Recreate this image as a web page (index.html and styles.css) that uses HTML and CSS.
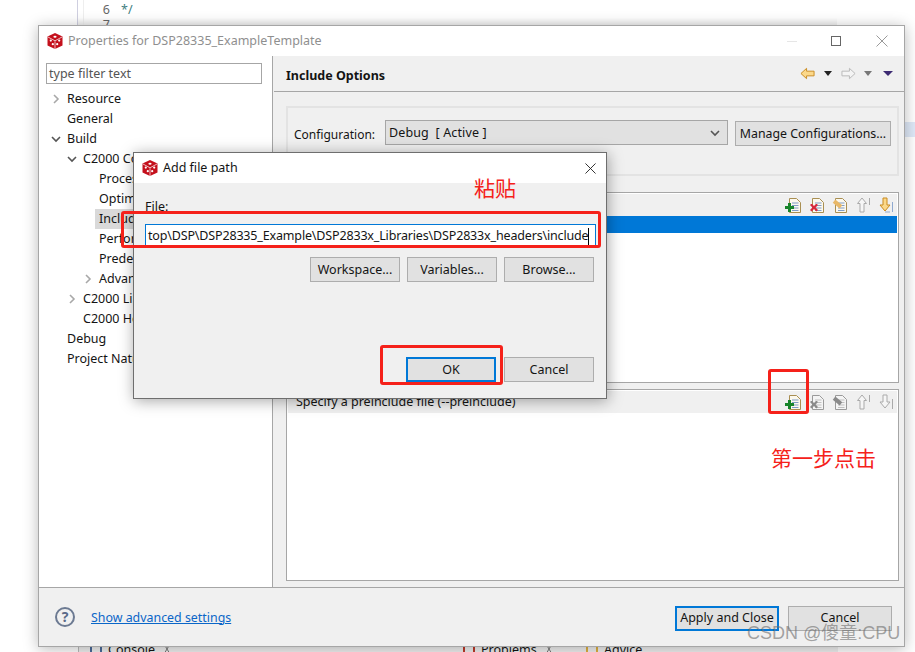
FILE: index.html
```html
<!DOCTYPE html>
<html lang="en">
<head>
<meta charset="utf-8">
<title>Properties for DSP28335_ExampleTemplate</title>
<link rel="stylesheet" href="styles.css">
</head>
<body>
<svg class="defs" width="0" height="0" aria-hidden="true">
  <symbol id="cube" viewBox="0 0 16 16">
    <path d="M8 0 15.5 3.4v9L8 16 .5 12.4v-9z" fill="#c4101c"/>
    <path d="M8 8.2V16M1 4l7 3.8L15 4" fill="none" stroke="#fff" stroke-width=".7"/>
    <ellipse cx="8" cy="3.7" rx="1.6" ry="1" fill="#fff"/>
    <circle cx="3.8" cy="7.6" r="1.1" fill="#fff"/><circle cx="5.8" cy="11.2" r="1.1" fill="#fff"/>
    <circle cx="12.2" cy="7.6" r="1.1" fill="#fff"/><circle cx="10.2" cy="11.2" r="1.1" fill="#fff"/>
  </symbol>
  <symbol id="doc" viewBox="0 0 14 15">
    <path d="M2.5 .5h7l4 4v10h-11z" fill="#fbf8ee" stroke="#a98f52"/>
    <path d="M5 5h6.5M5 7.5h6.5M5 10h6.5M5 12.5h6.5" stroke="#7f9cc6"/>
  </symbol>
  <symbol id="docg" viewBox="0 0 14 15">
    <path d="M2.5 .5h7l4 4v10h-11z" fill="#f4f4f4" stroke="#9a9a9a"/>
    <path d="M5 5h6.5M5 7.5h6.5M5 10h6.5M5 12.5h6.5" stroke="#c0c0c0"/>
  </symbol>
  <symbol id="pin" viewBox="0 0 12 12"><path d="M2 1h8M3 1l3 5 3-5M6 6l-3 5h6z" fill="none" stroke="#777"/></symbol>
  <symbol id="chev-r" viewBox="0 0 10 10"><path d="M3 1l4 4-4 4" fill="none" stroke="#a8a8a8" stroke-width="1.6"/></symbol>
  <symbol id="chev-d" viewBox="0 0 10 10"><path d="M1 3l4 4 4-4" fill="none" stroke="#555" stroke-width="1.6"/></symbol>
</svg>

<div class="editor">
  <div class="gutter"><span>6</span><span>7</span></div>
  <div class="code">*/</div>
</div>
<div class="sel-row"></div>
<div class="bottom-tabs">
  <span class="btab btab-console"><i class="tab-ico"></i>Console <svg class="tab-pin"><use href="#pin"/></svg></span>
  <span class="btab btab-problems"><i class="tab-ico tab-ico-red"></i>Problems <svg class="tab-pin"><use href="#pin"/></svg></span>
  <span class="btab btab-advice"><i class="tab-ico tab-ico-yellow"></i>Advice</span>
</div>

<div class="window">
  <header class="titlebar">
    <svg class="logo"><use href="#cube"/></svg>
    <span class="title-text">Properties for DSP28335_ExampleTemplate</span>
    <span class="win-ctrls">
      <i class="min"></i><i class="max"></i>
      <svg class="close" viewBox="0 0 12 12"><path d="M.5.5l11 11M11.5.5l-11 11" stroke="#9a9a9a" fill="none"/></svg>
    </span>
  </header>

  <div class="main">
    <aside class="side">
      <div class="filter">type filter text</div>
      <ul class="tree">
        <li class="l0"><svg class="tw"><use href="#chev-r"/></svg>Resource</li>
        <li class="l0">General</li>
        <li class="l0"><svg class="tw"><use href="#chev-d"/></svg>Build</li>
        <li class="l1"><svg class="tw"><use href="#chev-d"/></svg>C2000 Compiler</li>
        <li class="l2">Processor Options</li>
        <li class="l2">Optimization</li>
        <li class="l2 selected">Include Options</li>
        <li class="l2">Performance</li>
        <li class="l2">Predefined Symbols</li>
        <li class="l2"><svg class="tw"><use href="#chev-r"/></svg>Advanced Options</li>
        <li class="l1"><svg class="tw"><use href="#chev-r"/></svg>C2000 Linker</li>
        <li class="l1">C2000 Hex Utility</li>
        <li class="l0">Debug</li>
        <li class="l0">Project Natures</li>
      </ul>
    </aside>

    <section class="content">
      <div class="content-head">
        <h1>Include Options</h1>
        <div class="nav">
          <svg class="nav-arrow" viewBox="0 0 16 13"><path d="M7 1 1 6.5 7 12V9h8V4H7z" fill="#fbd88a" stroke="#c98a1e"/></svg>
          <i class="tri"></i>
          <svg class="nav-arrow nav-fwd" viewBox="0 0 16 13"><path d="M9 1l6 5.5L9 12V9H1V4h8z" fill="#f4f4f4" stroke="#b8b8b8"/></svg>
          <i class="tri tri-gray"></i>
          <i class="tri tri-purple"></i>
        </div>
      </div>
      <div class="content-body">
        <div class="config">
          <label>Configuration:</label>
          <div class="combo"><span class="combo-text">Debug&nbsp;&nbsp;[ Active ]</span><svg class="combo-chev"><use href="#chev-d"/></svg></div>
          <button class="btn btn-manage">Manage Configurations...</button>
        </div>

        <div class="listbox listbox-top">
          <div class="list-bar">
            <span class="bar-label">Add dir to #include search path</span>
            <span class="tools">
              <span class="tool"><svg><use href="#doc"/></svg><i class="badge badge-add"></i></span>
              <span class="tool"><svg><use href="#doc"/></svg><i class="badge badge-del"></i></span>
              <span class="tool"><svg><use href="#doc"/></svg><i class="badge badge-edit"></i></span>
              <svg class="tool-arrow" viewBox="0 0 14 16"><path d="M6 1 1.5 6.5H4V15h4V6.500h2.500z" fill="#f6f6f6" stroke="#aaa"/><path d="M13.500 1v7" stroke="#aaa"/></svg>
              <svg class="tool-arrow" viewBox="0 0 14 16"><path d="M4 1h4v7h3l-5 6-5-6h3z" fill="#fbd88a" stroke="#c98a1e"/><path d="M13.500 5v10M6 15h5" stroke="#8fa9cf"/></svg>
            </span>
          </div>
          <div class="list-row-sel"></div>
        </div>

        <div class="listbox listbox-bottom">
          <div class="list-bar">
            <span class="bar-label">Specify a preinclude file (--preinclude)</span>
            <span class="tools">
              <span class="tool"><svg><use href="#doc"/></svg><i class="badge badge-add"></i></span>
              <span class="tool"><svg><use href="#docg"/></svg><i class="badge badge-del badge-gray"></i></span>
              <span class="tool"><svg><use href="#docg"/></svg><i class="badge badge-edit badge-gray"></i></span>
              <svg class="tool-arrow" viewBox="0 0 14 16"><path d="M6 1 1.500 6.500H4V15h4V6.500h2.500z" fill="#f6f6f6" stroke="#aaa"/><path d="M13.500 1v7" stroke="#aaa"/></svg>
              <svg class="tool-arrow" viewBox="0 0 14 16"><path d="M4 1h4v7h3l-5 6-5-6h3z" fill="#f6f6f6" stroke="#aaa"/><path d="M13.500 5v10" stroke="#aaa"/></svg>
            </span>
          </div>
        </div>
      </div>
    </section>
  </div>

  <footer class="footer">
    <span class="help">?</span>
    <a class="adv">Show advanced settings</a>
    <span class="foot-btns">
      <button class="btn btn-foot btn-default">Apply and Close</button>
      <button class="btn btn-foot">Cancel</button>
    </span>
  </footer>
</div>

<div class="dialog">
  <header class="dlg-title">
    <svg class="logo"><use href="#cube"/></svg>
    <span>Add file path</span>
    <svg class="dlg-close" viewBox="0 0 12 12"><path d="M.5.5l11 11M11.5.5l-11 11" stroke="#222" fill="none"/></svg>
  </header>
  <div class="dlg-body">
    <div class="file-label">File:</div>
    <div class="file-input"><span class="file-text">top\DSP\DSP28335_Example\DSP2833x_Libraries\DSP2833x_headers\include</span><i class="caret"></i></div>
    <div class="dlg-row">
      <button class="btn btn-dlg">Workspace...</button>
      <button class="btn btn-dlg">Variables...</button>
      <button class="btn btn-dlg">Browse...</button>
    </div>
    <div class="dlg-actions">
      <button class="btn btn-dlg btn-default">OK</button>
      <button class="btn btn-dlg">Cancel</button>
    </div>
  </div>
</div>

<div class="mark mark-input"></div>
<div class="mark mark-ok"></div>
<div class="mark mark-add"></div>
<div class="note note-paste">粘贴</div>
<div class="note note-step">第一步点击</div>
<div class="watermark">CSDN @傻童:CPU</div>
</body>
</html>
```

FILE: styles.css
```css
* { box-sizing: border-box; }
html, body { margin: 0; height: 100%; }
body {
  position: relative;
  width: 915px;
  height: 652px;
  overflow: hidden;
  background: #fff;
  font: 12.5px/20px "Noto Sans", "Noto Sans CJK SC", sans-serif;
  color: #141414;
}
.defs { position: absolute; }
ul { list-style: none; margin: 0; padding: 0; }
h1 { margin: 0; padding-top: 6px; font-size: 12.5px; font-weight: 700; }

/* background IDE */
.editor {
  position: absolute; left: 77px; top: 0; width: 760px; height: 25px;
  display: flex; border-left: 1px solid #cfcfe0;
  background: linear-gradient(#fff 70%, #f0f0f0);
}
.gutter {
  width: 32px; padding-right: 5px; text-align: right; color: #666; line-height: 15px;
  padding-top: 2px; display: flex; flex-direction: column; border-left: 1px solid #eee; margin-left: 5px;
}
.code { color: #3f7f7f; padding: 2px 0 0 6px; line-height: 15px; }
.sel-row { position: absolute; left: 905px; top: 122px; width: 10px; height: 15px; background: #dfe9f8; }
.bottom-tabs {
  position: absolute; left: 78px; top: 647px; width: 760px; height: 5px;
  background: #f0f0f0; border-left: 1px solid #bbb;
}
.btab { position: absolute; top: -6px; line-height: 17px; font-size: 12.5px; white-space: nowrap; }
.tab-pin { width: 12px; height: 12px; vertical-align: -1px; margin-left: 3px; }
.btab-console { left: 11px; }
.btab-problems { left: 384px; }
.btab-advice { left: 507px; }
.tab-ico { display: inline-block; width: 12px; height: 12px; margin-right: 6px; border: 2px solid #4a6a9a; vertical-align: -1px; }
.tab-ico-red { border-color: #c0392b; }
.tab-ico-yellow { border-color: #e0b040; }

/* main window */
.window {
  position: absolute; left: 38px; top: 25px; width: 867px; height: 622px;
  display: flex; flex-direction: column;
  background: #f0f0f0; border: 1px solid #a6a6a6;
  box-shadow: 0 2px 14px rgba(0,0,0,.28);
}
.titlebar {
  height: 30px; flex: none; background: #fff;
  display: flex; align-items: center; padding-left: 8px; color: #9a9a9a;
}
.logo { width: 16px; height: 16px; flex: none; margin-right: 5px; }
.title-text { color: #8f8f8f; }
.win-ctrls { margin-left: auto; display: flex; align-items: center; }
.min { width: 10px; height: 1px; background: #e6e6e6; margin-right: 34px; }
.max { width: 10px; height: 10px; border: 1px solid #666; margin-right: 35px; }
.close { width: 12px; height: 12px; margin-right: 16px; }

.main { flex: 1; display: flex; min-height: 0; }
.side { width: 234px; flex: none; background: #fff; border-right: 1px solid #a6a6a6; padding: 7px 0 0 7px; overflow: hidden; }
.filter {
  width: 216px; height: 21px; border: 1px solid #a6a6a6; padding-left: 2px;
  line-height: 19px; color: #555;
}
.tree { margin: 5px 0 0 -7px; }
.tree li { position: relative; height: 20px; white-space: nowrap; }
.l0 { padding-left: 28px; }
.l1 { padding-left: 44px; }
.l2 { padding-left: 60px; }
.tw { position: absolute; width: 10px; height: 10px; top: 5px; }
.l0 .tw { left: 12px; }
.l1 .tw { left: 28px; }
.l2 .tw { left: 44px; }
.tree .selected { background: linear-gradient(90deg, transparent 56px, #d9d9d9 56px); }

.content { flex: 1; display: flex; flex-direction: column; min-width: 0; }
.content-head {
  height: 36px; flex: none; display: flex; align-items: center;
  border-bottom: 1px solid #a6a6a6; padding: 0 11px 1px 12px; margin-left: 1px;
}
.nav { margin-left: auto; display: flex; align-items: center; }
.nav-arrow { width: 15px; height: 13px; }
.nav-fwd { margin-left: 9px; }
.tri { width: 0; height: 0; margin-left: 9px; border: 4px solid transparent; border-top: 5px solid #222; border-bottom: 0; }
.tri-gray { border-top-color: #777; margin-left: 8px; }
.tri-purple { border: 5px solid transparent; border-top: 5px solid #3c2a72; border-bottom: 0; margin-left: 11px; }

.content-body { flex: 1; padding: 14px 5px 6px 13px; display: flex; flex-direction: column; }
.config {
  height: 70px; flex: none; border: 2px solid #e3e3e3; padding: 12px 6px 0 6px;
  display: flex; align-items: flex-start;
}
.config label { width: 91px; padding-top: 5px; line-height: 20px; font-size: 12px; }
.combo {
  width: 343px; height: 25px; background: #e1e1e1; border: 1px solid #a6a6a6;
  padding: 0 4px 0 3px; display: flex; align-items: center; justify-content: space-between; line-height: 20px;
}
.combo-text { letter-spacing: .12px; }
.combo-chev { width: 10px; height: 10px; margin-right: 3px; }
.btn {
  font: inherit; color: #141414; background: #e1e1e1; border: 1px solid #adadad;
  padding: 0; line-height: 20px; display: inline-flex; align-items: center; justify-content: center;
}
.btn-manage { width: 156px; height: 25px; margin: 1px 0 0 7px; font-size: 12.35px; }

.listbox { border: 1px solid #a6a6a6; background: #fff; padding: 1px; display: flex; flex-direction: column; }
.listbox-top { height: 191px; margin-top: 16px; }
.listbox-bottom { height: 192px; margin-top: 6px; }
.list-bar { height: 22px; flex: none; background: #f0f0f0; display: flex; align-items: center; padding-left: 8px; }
.tools { margin-left: auto; display: flex; align-items: center; padding-right: 4px; }
.tool { position: relative; width: 23px; height: 15px; display: block; }
.tool svg { position: absolute; right: 0; top: 0; width: 14px; height: 15px; }
.badge { position: absolute; display: block; }
.badge-add {
  left: 7px; top: 5px; width: 9px; height: 9px;
  background:
    linear-gradient(#17842a, #17842a) center / 3px 9px no-repeat,
    linear-gradient(#17842a, #17842a) center / 9px 3px no-repeat;
}
.badge-del {
  left: 9px; top: 6px; width: 8px; height: 8px;
  background: #d8283c; clip-path: polygon(0 20%, 20% 0, 50% 30%, 80% 0, 100% 20%, 70% 50%, 100% 80%, 80% 100%, 50% 70%, 20% 100%, 0 80%, 30% 50%);
}
.badge-edit { left: 9px; top: 4px; width: 9px; height: 4px; background: #e8b868; transform: rotate(40deg); }
.badge-gray { background: #8a8a8a; }
.tool-arrow { width: 14px; height: 16px; margin-left: 9px; }
.list-row-sel { height: 17px; background: #0078d7; flex: none; }

.footer { height: 59px; flex: none; border-top: 1px solid #a6a6a6; display: flex; align-items: center; padding: 0 12px 0 16px; }
.help {
  width: 20px; height: 20px; border: 2px solid #6c7a92; border-radius: 50%;
  color: #5a6a88; font-weight: 700; font-size: 14px; line-height: 16px; text-align: center; flex: none;
}
.adv { margin: 1px 0 0 16px; color: #0a66c8; text-decoration: underline; line-height: 20px; font-size: 12.4px; }
.foot-btns { margin-left: auto; display: flex; gap: 9px; }
.btn-foot { width: 104px; height: 25px; margin-top: 2px; }
.btn-default { border: 2px solid #0078d7; }

/* dialog */
.dialog {
  position: absolute; left: 133px; top: 152px; width: 474px; height: 247px;
  background: #f0f0f0; border: 1px solid #6e6e6e;
  box-shadow: 1px 2px 14px rgba(0,0,0,.35);
  display: flex; flex-direction: column;
}
.dlg-title { height: 30px; flex: none; background: #fff; display: flex; align-items: center; padding-left: 8px; }
.dlg-close { width: 11px; height: 11px; margin-left: auto; margin-right: 10px; }
.dlg-body { flex: 1; padding: 14px 12px 0 11px; display: flex; flex-direction: column; }
.file-label { height: 18px; line-height: 20px; }
.file-input {
  margin-top: 9px; width: 451px; height: 24px; background: #fff; border: 1px solid #0078d7;
  padding-left: 2px; display: flex; align-items: center; overflow: hidden; white-space: nowrap;
}
.file-text { font-size: 12.5px; letter-spacing: -.16px; }
.caret { width: 1px; height: 17px; background: #000; flex: none; margin-left: -1px; }
.dlg-row { display: flex; justify-content: flex-end; gap: 7px; margin-top: 9px; }
.btn-dlg { width: 90px; height: 25px; }
.dlg-actions { display: flex; justify-content: flex-end; gap: 8px; margin-top: 75px; }

/* annotations */
.mark { position: absolute; border: 3px solid #f5211a; border-radius: 3px; }
.mark-input { left: 121px; top: 211px; width: 480px; height: 37px; }
.mark-ok { left: 380px; top: 345px; width: 123px; height: 40px; }
.mark-add { left: 768px; top: 369px; width: 41px; height: 45px; }
.note { position: absolute; color: #f5211a; font: 21px/26px "Noto Sans CJK SC", sans-serif; white-space: nowrap; }
.note-paste { left: 474px; top: 174px; }
.note-step { left: 771px; top: 444px; }
.watermark {
  position: absolute; left: 747px; top: 620px; color: rgba(110,110,110,.62);
  font: 18px/26px "Liberation Sans", "Noto Sans CJK SC", sans-serif; white-space: nowrap;
}
```
